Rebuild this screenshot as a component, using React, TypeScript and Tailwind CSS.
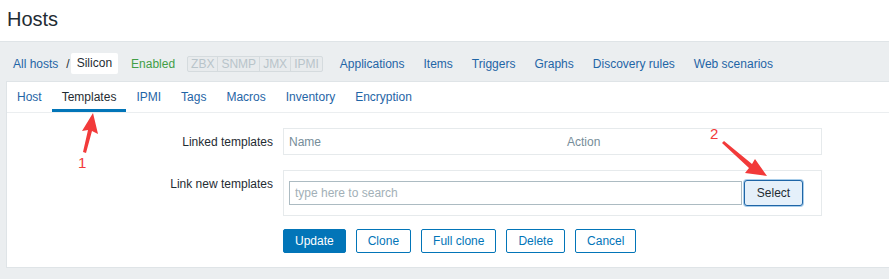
import React from 'react';

const navLinks = ['Applications', 'Items', 'Triggers', 'Graphs', 'Discovery rules', 'Web scenarios'];
const tabs = ['Host', 'Templates', 'IPMI', 'Tags', 'Macros', 'Inventory', 'Encryption'];
const interfaces = ['ZBX', 'SNMP', 'JMX', 'IPMI'];

export default function App() {
  return (
    <div className="relative w-[889px] h-[279px] overflow-hidden bg-[#ebeef0] font-['Liberation_Sans',Arial,sans-serif] text-[12px] text-[#1f2c33]">
      {/* Header */}
      <header className="h-[41px] bg-white px-[7px] pt-[7px]">
        <h1 className="text-[20px] leading-[24px]">Hosts</h1>
      </header>

      {/* Host navigation */}
      <div className="border-t border-[#dfe4e7]">
        <nav className="flex items-center h-[39px] pt-[4px] pl-[13px]">
          <a className="text-[#1f65a6]">All hosts</a>
          <span className="ml-[8px] text-[#1f2c33]">/</span>
          <span className="ml-[1px] bg-white px-[6px] leading-[21px] h-[21px] rounded-[2px]">Silicon</span>
          <span className="ml-[13px] text-[#429e47]">Enabled</span>
          <div className="ml-[12px] flex border border-[#d5dbde] bg-[#e8ebed] h-[16px] rounded-[2px]">
            {interfaces.map((i, idx) => (
              <span
                key={i}
                className={`px-[3px] leading-[14px] text-[#b8c4ca] ${idx > 0 ? 'border-l border-[#d5dbde]' : ''}`}
              >
                {i}
              </span>
            ))}
          </div>
          <div className="ml-[17px] flex gap-[19px]">
            {navLinks.map((l) => (
              <a key={l} className="text-[#1f65a6]">
                {l}
              </a>
            ))}
          </div>
        </nav>

        {/* Panel */}
        <section className="ml-[6px] bg-white border border-r-0 border-[#dfe4e7]">
          <ul className="flex h-[31px] border-b border-[#ebeef0]">
            {tabs.map((t) => (
              <li
                key={t}
                className={`px-[10px] flex items-center ${
                  t === 'Templates' ? 'text-[#1f2c33] border-b-[3px] border-[#0275b8] pt-[3px]' : 'text-[#1f65a6]'
                }`}
              >
                {t}
              </li>
            ))}
          </ul>

          <div className="pt-[15px] pb-[14px]">
            {/* Linked templates */}
            <div className="flex">
              <label className="w-[266px] text-right pt-[5px]">Linked templates</label>
              <div className="ml-[10px] w-[539px] h-[27px] border border-[#e6eaec] flex items-center text-[#768d99]">
                <span className="w-[283px] pl-[5px]">Name</span>
                <span>Action</span>
              </div>
            </div>

            {/* Link new templates */}
            <div className="flex mt-[15px]">
              <label className="w-[266px] text-right pt-[5px]">Link new templates</label>
              <div className="ml-[10px] w-[539px] h-[46px] border border-[#e6eaec] flex items-center pl-[5px]">
                <input
                  readOnly
                  placeholder="type here to search"
                  className="w-[453px] h-[24px] border border-[#acbbc2] px-[5px] text-[12px] placeholder:text-[#a2b0b7] outline-none"
                />
                <button className="ml-[2px] h-[26px] w-[59px] rounded-[3px] border border-[#1f65a6] bg-[#e5f0fa] text-[#1f2c33] shadow-[0_0_0_1px_#a8cdea]">
                  Select
                </button>
              </div>
            </div>

            {/* Buttons */}
            <div className="flex gap-[10px] mt-[13px] ml-[276px]">
              <button className="h-[24px] px-[11px] rounded-[2px] bg-[#0275b8] border border-[#0275b8] text-white">Update</button>
              {['Clone', 'Full clone', 'Delete', 'Cancel'].map((b) => (
                <button
                  key={b}
                  className="h-[24px] px-[11px] rounded-[2px] bg-white border border-[#0275b8] text-[#0275b8]"
                >
                  {b}
                </button>
              ))}
            </div>
          </div>
        </section>
      </div>

      {/* Annotations */}
      <svg className="absolute left-0 top-0 pointer-events-none" width="889" height="279">
        <polygon points="93,113 98,134 92,131 86,153 83,152 88,130 82,131" fill="#f23a3a" />
        <polygon points="767,176 745,173 749,168 722,143 724,141 752,164 755,159" fill="#f23a3a" />
      </svg>
      <span className="absolute left-[78px] top-[155px] text-[15px] leading-[16px] text-[#f23a3a]">1</span>
      <span className="absolute left-[710px] top-[126px] text-[15px] leading-[16px] text-[#f23a3a]">2</span>
    </div>
  );
}
